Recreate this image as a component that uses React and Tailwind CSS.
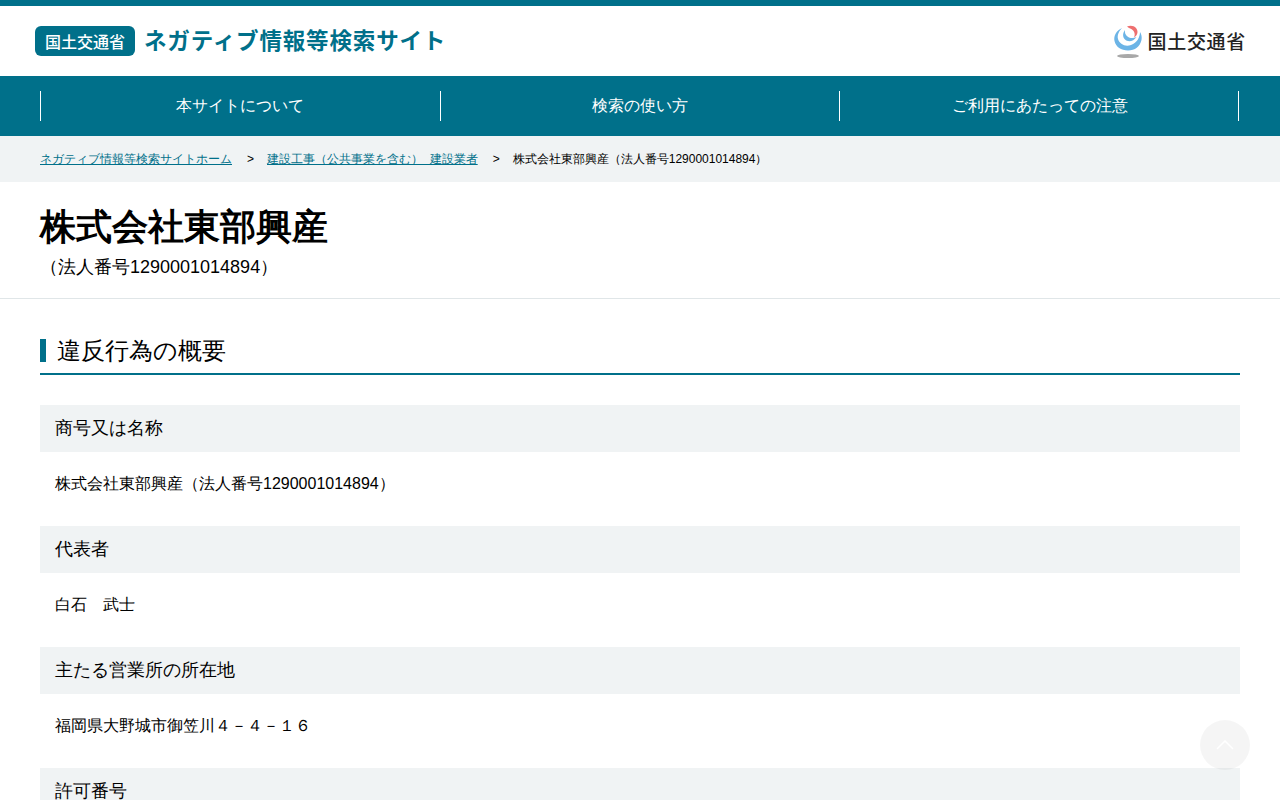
import React from "react";

function Logo() {
  return (
    <svg width="30" height="34" viewBox="0 0 30 34" className="block">
      <ellipse cx="15" cy="32" rx="11" ry="2" fill="#a8a8a8" />
      {/* outer blue ring */}
      <path d="M9 4C3 7 .5 12 1.500 17C3 23 8 26.500 15 26.500C22 26.500 27 22.500 28.500 16C29 13 28.500 10 27 8C27 13 24 19 18 21C12 23 6.500 20 5 15C4 11 6 7 9 4z" fill="#6cb4e6" />
      {/* inner blue swirl */}
      <path d="M12 6C9.500 9 9.500 13 12 15.500C15 18.500 20.500 17.500 23.500 13C20.500 14.500 17 14.500 14.500 12.500C12.500 11 11.500 8.500 12 6z" fill="#6cb4e6" />
      {/* red arc */}
      <path d="M14 2.500C17 1 21 1.500 23 4C25.500 7 25 11 21 13.500C22.500 10.500 21.500 7 19 5.500C17.500 4.600 15.500 4 14 2.500z" fill="#ee6f6f" />
    </svg>
  );
}

function NavItem({ className, children }) {
  return (
    <li className={`${className} border-r border-white flex items-center justify-center h-[30px] text-white text-[16px]`}>
      {children}
    </li>
  );
}

function Row({ label, children }) {
  return (
    <div className="mb-[26px]">
      <h3 className="bg-[#f0f3f4] h-[47px] flex items-center px-[15px] text-[18px] font-normal text-black">{label}</h3>
      <p className="px-[15px] pt-[21px] pb-[1px] h-[48px] text-[16px] leading-[22px] text-black">{children}</p>
    </div>
  );
}

export default function App() {
  return (
    <div className="bg-white text-black h-[800px] overflow-hidden relative">
      <div className="font-['Liberation_Sans',sans-serif]">
        {/* header */}
        <header className="border-t-[6px] border-[#00708a] h-[76px] pl-[35px] pr-[34px] flex items-center justify-between">
          <div className="flex items-center gap-[9px]">
            <span className="bg-[#00708a] text-white rounded-[6px] w-[100px] h-[30px] flex items-center justify-center text-[16px] font-['Noto_Sans_CJK_JP',sans-serif] font-medium">
              国土交通省
            </span>
            <span className="text-[#00708a] text-[22.500px] tracking-[0.850px] font-bold font-['Noto_Sans_CJK_JP',sans-serif] leading-none pb-[3px]">
              ネガティブ情報等検索サイト
            </span>
          </div>
          <div className="flex items-center gap-[4px]">
            <Logo />
            <span className="text-[19px] text-[#222] font-medium font-['Noto_Sans_CJK_JP',sans-serif] tracking-[0.700px]">国土交通省</span>
          </div>
        </header>

        {/* nav */}
        <nav className="bg-[#00708a] h-[60px] px-[40px] flex items-center">
          <ul className="flex">
            <NavItem className="w-[401px] border-l pr-[1px]">本サイトについて</NavItem>
            <NavItem className="w-[399px]">検索の使い方</NavItem>
            <NavItem className="w-[399px] pl-[1px]">ご利用にあたっての注意</NavItem>
          </ul>
        </nav>

        {/* breadcrumb */}
        <div className="bg-[#f0f3f4] h-[46px] px-[40px] flex items-center text-[12px]">
          <a href="#" className="text-[#00708a] underline">ネガティブ情報等検索サイトホーム</a>
          <span className="ml-[15px] mr-[13px]">&gt;</span>
          <a href="#" className="text-[#00708a] underline">建設工事（公共事業を含む）&nbsp;&nbsp;建設業者</a>
          <span className="ml-[15px] mr-[13px]">&gt;</span>
          <span>株式会社東部興産（法人番号1290001014894）</span>
        </div>

        {/* title */}
        <div className="h-[117px] px-[40px] pt-[22px] border-b border-[#e0e6e8]">
          <h1 className="text-[36px] font-bold leading-[46px]">株式会社東部興産</h1>
          <p className="text-[18px] leading-[26px] mt-[4px]">（法人番号1290001014894）</p>
        </div>

        {/* content */}
        <main className="px-[40px] pt-[40px]">
          <h2 className="border-b-2 border-[#00708a] pb-[2px] mb-[30px] h-[36px]">
            <span className="block border-l-[6px] border-[#00708a] pl-[11px] text-[24px] leading-[24px] font-normal h-[23px]">違反行為の概要</span>
          </h2>
          <Row label="商号又は名称">株式会社東部興産（法人番号1290001014894）</Row>
          <Row label="代表者">白石　武士</Row>
          <Row label="主たる営業所の所在地">福岡県大野城市御笠川４－４－１６</Row>
          <Row label="許可番号">国土交通大臣許可</Row>
        </main>
      </div>

      {/* page top */}
      <button className="absolute left-[1200px] top-[720px] w-[50px] h-[50px] rounded-full bg-black/[0.04] flex items-center justify-center">
        <svg width="18" height="10" viewBox="0 0 18 10" fill="none" stroke="#ffffff" strokeWidth="1.500">
          <path d="M1 9l8-8l8 8" />
        </svg>
      </button>
    </div>
  );
}
